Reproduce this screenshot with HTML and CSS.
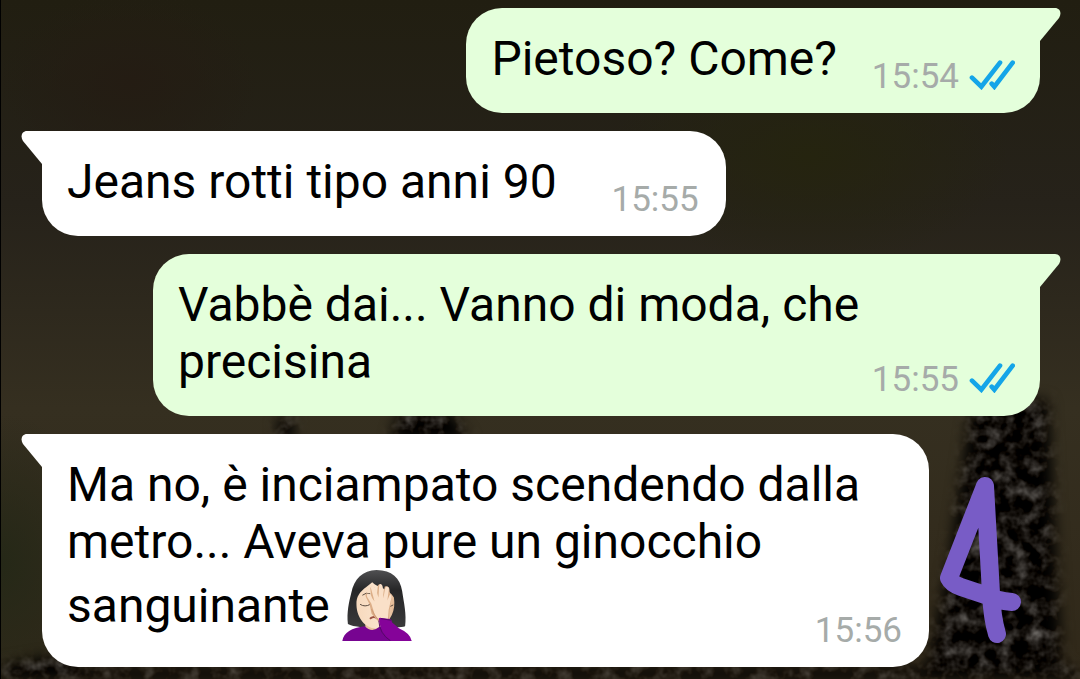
FILE: index.html
```
<!DOCTYPE html>
<html lang="it">
	<head>
		<meta charset="utf-8" />
		<meta name="viewport" content="width=device-width, initial-scale=1">
		<title>Chat</title>
		<link rel="stylesheet" href="styles.css">
	</head>
	<body>
		<!-- wallpaper -->
		<svg class="wallpaper" viewBox="0 0 1080 679" preserveAspectRatio="none" aria-hidden="true">
			<defs>
				<filter id="leaves" x="0" y="0" width="100%" height="100%" color-interpolation-filters="sRGB">
					<feTurbulence type="fractalNoise" baseFrequency="0.07" numOctaves="3" seed="8" result="noise" />
					<feColorMatrix in="noise" type="matrix" values="0.7 0.1 0 0 -0.33  0.7 0.1 0 0 -0.345  0.7 0.1 0 0 -0.36  0 0 0 0 1" />
				</filter>
				<filter id="soft"><feGaussianBlur stdDeviation="7" /></filter>
				<mask id="trees">
					<g fill="#fff" filter="url(#soft)">
						<path d="M972 400H1048L1062 679H925L950 560Z" />
						<path d="M0 665L60 655L110 679H0Z" />
						<path d="M400 412H450L470 440H390Z" />
						<path d="M278 418H294V440H278Z" />
						<path d="M40 668H1080V679H40Z" />
					</g>
				</mask>
			</defs>
			<g mask="url(#trees)">
				<rect width="1080" height="679" filter="url(#leaves)" />
			</g>
		</svg>
		<main class="chat">
			<div class="row out">
				<div class="bubble">
					<svg class="tail" viewBox="0 0 22 34" aria-hidden="true"><path d="M0 0H16C21 0 23 5 20 10L1 33H0Z" /></svg>
					<p class="text short">Pietoso? Come?</p>
					<div class="meta">
						<time>15:54</time>
						<svg class="ticks" viewBox="330 173 138 90" role="img" aria-label="Letto"><path d="M339 226L367 253L423 181M398 244L406 253L461 181" /></svg>
					</div>
				</div>
			</div>
			<div class="row in">
				<div class="bubble">
					<svg class="tail" viewBox="0 0 22 34" aria-hidden="true"><path d="M22 0H6C1 0 -1 5 2 10L21 33H22Z" /></svg>
					<p class="text short">Jeans rotti tipo anni 90</p>
					<div class="meta"><time>15:55</time></div>
				</div>
			</div>
			<div class="row out">
				<div class="bubble">
					<svg class="tail" viewBox="0 0 22 34" aria-hidden="true"><path d="M0 0H16C21 0 23 5 20 10L1 33H0Z" /></svg>
					<p class="text">Vabbè dai... Vanno di moda, che precisina</p>
					<div class="meta">
						<time>15:55</time>
						<svg class="ticks" viewBox="330 173 138 90" role="img" aria-label="Letto"><path d="M339 226L367 253L423 181M398 244L406 253L461 181" /></svg>
					</div>
				</div>
			</div>
			<div class="row in">
				<div class="bubble">
					<svg class="tail" viewBox="0 0 22 34" aria-hidden="true"><path d="M22 0H6C1 0 -1 5 2 10L21 33H22Z" /></svg>
					<p class="text">Ma no, è inciampato scendendo dalla metro... Aveva pure un ginocchio sanguinante <svg class="emoji" viewBox="38 27 213 216" role="img" aria-label="facepalm">
						<defs>
							<linearGradient id="hair" x1="0" y1="0" x2="0" y2="1">
								<stop offset="0" stop-color="#505052" />
								<stop offset=".35" stop-color="#262627" />
								<stop offset="1" stop-color="#3a3a3b" />
							</linearGradient>
							<linearGradient id="skin" x1="0" y1="0" x2="1" y2="0">
								<stop offset="0" stop-color="#f7d9bd" />
								<stop offset=".6" stop-color="#fae3cc" />
								<stop offset="1" stop-color="#e3b994" />
							</linearGradient>
						</defs>
						<path fill="url(#hair)" d="M56 191C52 157 59 126 66 98C75 53 101 28 143 27C190 27 215 52 221 91C226 126 235 162 230 198C205 206 82 207 56 191Z" />
						<path fill="#e8c19d" d="M109 178H158V216Q133 228 109 213Z" />
						<path fill="url(#skin)" d="M82 133C81 108 92 94 112 79L130 64C143 79 181 82 196 111C202 151 188 183 151 203C119 213 83 180 82 133Z" />
						<path fill="none" stroke="#57483d" stroke-width="3" stroke-linecap="round" d="M94 132Q108 141 123 132M101 103Q111 94 123 99M178 137Q186 140 193 134" />
						<path fill="none" stroke="#9b5142" stroke-width="6" stroke-linecap="round" d="M125 174Q135 166 145 174" />
						<path fill="#dcae88" d="M122 132L111 110Q107 100 114 98L120 101L128 117L124 83Q125 76 132 77L138 82L144 106L147 75Q151 68 158 72L163 103L168 77Q178 75 182 83L184 103Q193 99 189 112L183 150L181 188L151 186L128 160Z" />
						<path fill="#fae0c8" d="M127 129L115 110Q111 100 118 99Q124 98 130 113L137 123L126 82Q126 75 132 76Q139 77 149 111L151 76Q151 68 157 70Q161 71 162 79L164 113L169 84Q171 75 177 78Q182 79 180 90L176 120L183 103Q189 98 189 109L180 148L177 184L151 181L137 161Z" />
						<path fill="none" stroke="#cf9974" stroke-width="3" d="M128 146Q137 169 151 181" />
						<path fill="#770491" d="M39 243C43 216 68 203 107 198Q129 220 153 199L209 207Q241 218 249 243Z" />
						<path fill="#850399" d="M151 180Q147 171 158 173L184 176Q190 177 190 186L211 204Q247 220 250 243H188Q154 218 151 180Z" />
						<path fill="none" stroke="#560768" stroke-width="3" d="M150 181Q152 221 185 242M157 175L188 180" />
					</svg></p>
					<div class="meta"><time>15:56</time></div>
				</div>
				<svg class="number" viewBox="0 0 84 170" role="img" aria-label="4"><path d="M46 10L10 102Q13 108 22 111L46 119Q58 125 73 126M46 10L52 117Q53 141 58 158" /></svg>
			</div>
		</main>
	</body>
</html>
```
FILE: styles.css
```
*{
	box-sizing: border-box;
	margin: 0;
	padding: 0;
}
body{
	min-height: 100vh;
	font-family: Roboto, "Liberation Sans", sans-serif;
	color: #000;
	border-left: 1px solid #000;
	background:
		radial-gradient(ellipse 130px 90px at 12% 12%, #241c13, transparent),
		radial-gradient(ellipse 200px 110px at 75% 23%, #25240f, transparent),
		radial-gradient(ellipse 110px 150px at 0 83%, #252817, transparent),
		linear-gradient(#211e11, #26221a 30%, #352f20 60%, #302819);
}
.wallpaper{
	position: fixed;
	top: 0;
	left: 0;
	width: 100%;
	height: 100%;
	z-index: -1;
}
.chat{
	display: flex;
	flex-direction: column;
	gap: 18px;
	padding: 8px 40px 12px 41px;
}
.row{
	display: flex;
	align-items: flex-start;
}
.out{
	justify-content: flex-end;
}
.bubble{
	position: relative;
	display: grid;
	max-width: calc(100% - 111px);
	padding: 22px 25px 23px;
	border-radius: 36px;
	background: #fff;
}
.in .bubble{
	border-top-left-radius: 0;
}
.out .bubble{
	border-top-right-radius: 0;
	background: #e4ffdb;
}
.tail{
	position: absolute;
	top: 0;
	width: 22px;
	height: 34px;
}
.in .tail{
	right: 100%;
	margin-right: -1px;
	fill: #fff;
}
.out .tail{
	left: 100%;
	margin-left: -1px;
	fill: #e4ffdb;
}
/* text and time share one cell, the time sits in its lower corner */
.text, .meta{
	grid-area: 1 / 1;
}
.text{
	padding-bottom: 3px;
	font-size: 48px;
	line-height: 57px;
}
.in .short{
	padding-right: 144px;
}
.out .short{
	padding-right: 178px;
}
.meta{
	display: flex;
	justify-self: end;
	align-self: end;
	align-items: flex-end;
	gap: 10px;
	font-size: 35px;
	line-height: 26px;
	color: #a6aba9;
}
.in .meta{
	padding-right: 2px;
}
.ticks{
	width: 46px;
	height: 30px;
	fill: none;
	stroke: #14a5e8;
	stroke-width: 14;
	stroke-linecap: round;
}
.emoji{
	width: 70px;
	height: 71px;
	vertical-align: -19px;
}
.number{
	flex: none;
	width: 84px;
	height: 170px;
	margin: 42px 0 0 10px;
	fill: none;
	stroke: #785cc6;
	stroke-width: 18;
	stroke-linecap: round;
	stroke-linejoin: round;
}
```
